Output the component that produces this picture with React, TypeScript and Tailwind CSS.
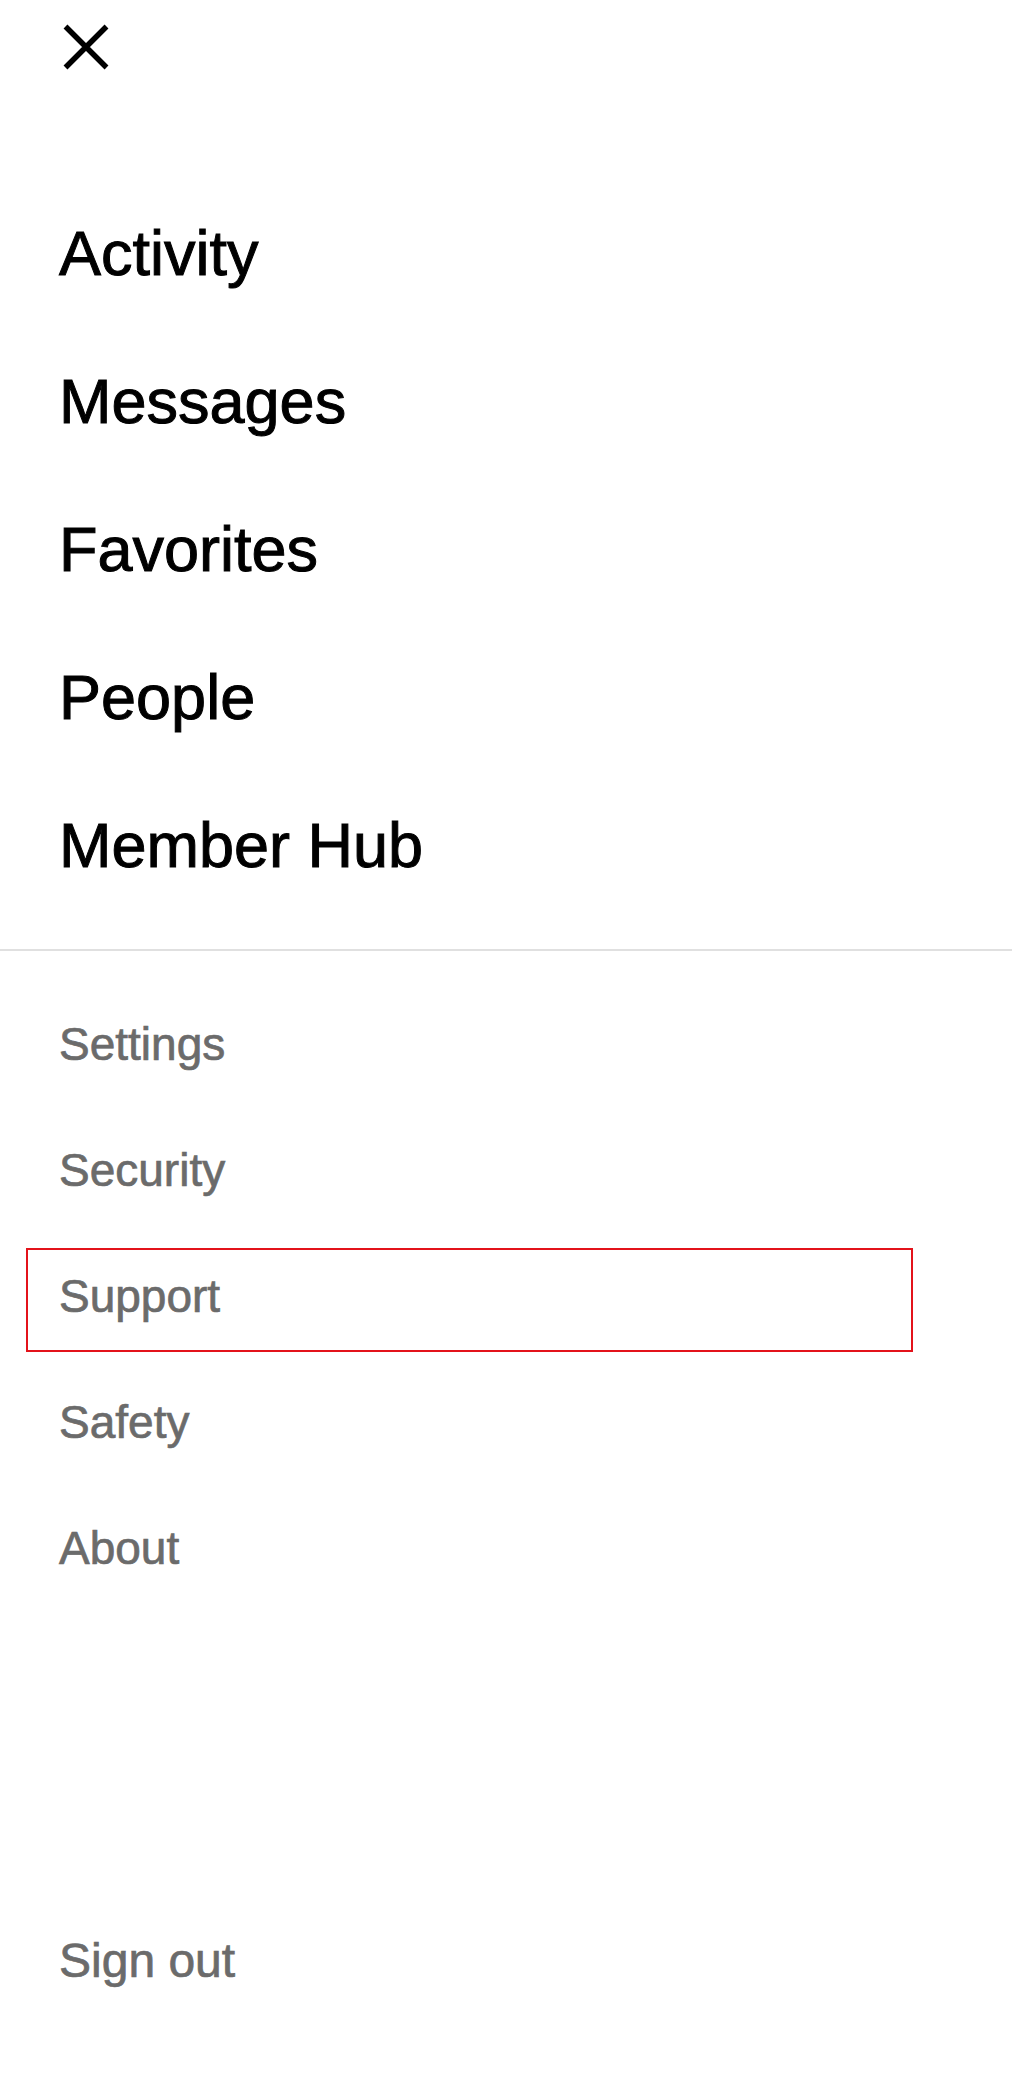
import type { ReactNode } from "react";

const primaryLinks = ["Activity", "Messages", "Favorites", "People", "Member Hub"];
const secondaryLinks = ["Settings", "Security", "Support", "Safety", "About"];

function CloseIcon() {
  return (
    <svg width="46" height="46" viewBox="0 0 46 46" fill="none" aria-hidden="true">
      <path d="M2.5 2.5L43.5 43.5M43.5 2.5L2.5 43.5" stroke="#000" strokeWidth="5.5" strokeLinecap="butt" />
    </svg>
  );
}

function SecondaryRow({ children, focused }: { children: ReactNode; focused?: boolean }) {
  return (
    <a
      href="#"
      className={`block h-[104px] border-2 pl-[31px] text-[46px] leading-[92px] text-[#6b6b6b] [-webkit-text-stroke:0.7px_#6b6b6b] ${
        focused ? "border-[#e3131b]" : "border-transparent"
      }`}
    >
      {children}
    </a>
  );
}

export default function App() {
  return (
    <div
      className="flex min-h-[2073px] w-full flex-col bg-white"
      style={{ fontFamily: '"Liberation Sans", Arial, sans-serif' }}
    >
      <header className="h-[179px] pl-[63px] pt-[24px]">
        <button type="button" aria-label="Close menu" className="block">
          <CloseIcon />
        </button>
      </header>

      <nav className="flex flex-col px-[59px]">
        {primaryLinks.map((label) => (
          <a
            key={label}
            href="#"
            className="block h-[148px] text-[63px] leading-[148px] text-black [-webkit-text-stroke:1px_#000]"
          >
            {label}
          </a>
        ))}
      </nav>

      <div className="mt-[30px] h-[2px] w-full bg-[#e0e0e0]" />

      <div className="mt-[45px] flex flex-col gap-[22px] pl-[26px] pr-[99px]">
        {secondaryLinks.map((label) => (
          <SecondaryRow key={label} focused={label === "Support"}>
            {label}
          </SecondaryRow>
        ))}
      </div>

      <div className="mt-auto pb-[60px] pl-[59px]">
        <a
          href="#"
          className="block h-[104px] text-[48px] leading-[104px] text-[#6b6b6b] [-webkit-text-stroke:0.7px_#6b6b6b]"
        >
          Sign out
        </a>
      </div>
    </div>
  );
}
